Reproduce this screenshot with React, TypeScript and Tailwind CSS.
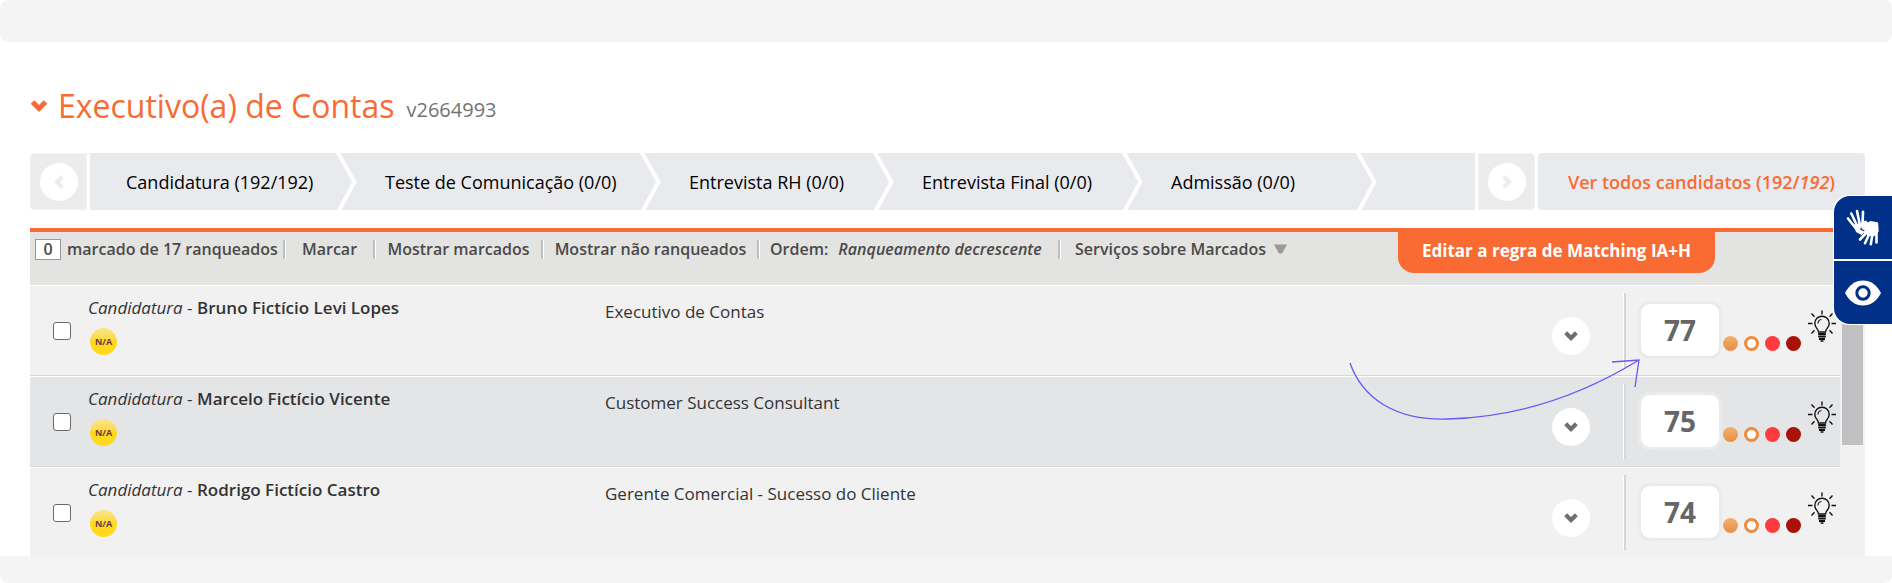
import React, { useState } from 'react';

type Candidate = { name: string; role: string; score: number };

const STAGES = [
  { label: 'Candidatura', count: '(192/192)', width: 'w-[267px] pl-9' },
  { label: 'Teste de Comunicação', count: '(0/0)', width: 'w-[304px] pl-7' },
  { label: 'Entrevista RH', count: '(0/0)', width: 'w-[233px] pl-7' },
  { label: 'Entrevista Final', count: '(0/0)', width: 'w-[249px] pl-7' },
  { label: 'Admissão', count: '(0/0)', width: 'w-[234px] pl-7' },
];

const CANDIDATES: Candidate[] = [
  { name: 'Bruno Fictício Levi Lopes', role: 'Executivo de Contas', score: 77 },
  { name: 'Marcelo Fictício Vicente', role: 'Customer Success Consultant', score: 75 },
  { name: 'Rodrigo Fictício Castro', role: 'Gerente Comercial - Sucesso do Cliente', score: 74 },
];

const Chevron = ({ className }: { className: string }) => (
  <svg viewBox="0 0 17 12" className={className} fill="none" stroke="currentColor" strokeWidth="5">
    <path d="M2 2 8.500 8.500 15 2" />
  </svg>
);

const StageArrow = () => (
  <svg viewBox="0 0 21 57" className="h-[57px] w-[21px] shrink-0" fill="none" stroke="#fff" strokeWidth="4">
    <path d="M1 -2 18.5 29 2 59" />
  </svg>
);

const BulbIcon = () => (
  <svg viewBox="0 0 30 32" className="h-8 w-[30px]" fill="none" stroke="#111" strokeWidth="1.4">
    <path d="M15 0.5v4M1 13.5h4.500M24.500 13.500h4.500M4.500 3.500l3 3.200M25.500 3.500l-3 3.200M4.500 23.500l3-3.200M25.500 23.500l-3-3.200" />
    <path d="M11.500 22c0-3.200-3.700-4.300-3.700-8.600a7.200 7.200 0 0 1 14.400 0c0 4.300-3.700 5.400-3.700 8.600z" />
    <path d="M11 13.500c0-2.200 1.300-3.700 3.500-4" strokeWidth="1.100" />
    <path d="M11.200 24h7.600M11.200 26.500h7.600M12 29h6" strokeWidth="2" />
    <path d="M13.500 31h3" strokeWidth="1.500" />
  </svg>
);

const HandsIcon = () => (
  <svg viewBox="0 0 34 37" className="h-[37px] w-[34px]" fill="none" stroke="#fff" strokeLinecap="round" strokeLinejoin="round">
    <path d="M9.500 19 2 9.500M11.500 17.500 5.300 4.500M14 16.500 11 2M16.500 16 17 2.800" strokeWidth="2.600" />
    <path d="M8.500 16.500 16.500 14.500 19.500 12.500 21 14 15 17.200 12.500 20.500 17 23 15.500 25 11 22.500Z" fill="#fff" strokeWidth="2" />
    <path d="M16.500 17.800 24.500 13.200 31 14.500 31.500 22 28 26 22.500 25.500 18.500 23 22 20 17 19.500Z" fill="#fff" strokeWidth="2.400" />
    <path d="M20.500 23.500 14 30.500M23.500 24.500 19 34.200M26.500 25 24.800 35.200M30.500 22 30.500 33.500" strokeWidth="2.600" />
  </svg>
);

const EyeIcon = () => (
  <svg viewBox="0 0 36 26" className="h-[26px] w-9">
    <path d="M0 13C4 5 10.500 0.500 18 0.500S32 5 36 13c-4 8-10.500 12.500-18 12.500S4 21 0 13z" fill="#fff" />
    <circle cx="18" cy="13" r="6.200" fill="#fff" stroke="#003087" strokeWidth="3" />
  </svg>
);

const Separator = () => <span className="h-[19px] w-[3px] shrink-0 border-l-2 border-r border-l-[#bfc0c2] border-r-white" />;

const NavButton = ({ label, side }: { label: string; side: 'left' | 'right' }) => (
  <button
    aria-label={label}
    className={`flex h-[57px] w-[57px] shrink-0 items-center justify-center border border-[#f1f1f1] bg-[#ececec] ${side === 'left' ? 'rounded-l' : 'rounded-r'}`}
  >
    <span className="flex h-[38px] w-[38px] items-center justify-center rounded-full bg-white text-[#ededed]">
      <Chevron className={`h-2.5 w-3.5 ${side === 'left' ? 'rotate-90' : '-rotate-90'}`} />
    </span>
  </button>
);

const CandidateRow = ({ name, role, score }: Candidate) => (
  <li className="flex h-[91px] border-b border-t border-b-[#d5d6d8] border-t-white bg-[#f1f1f1] even:bg-[#e4e5e7]">
    <label className="flex w-[58px] shrink-0 items-center pl-[23px]">
      <input
        type="checkbox"
        aria-label={name}
        className="h-[18px] w-[18px] appearance-none rounded-[3px] border border-[#6b6b6b] bg-white checked:bg-[#f96b33]"
      />
    </label>
    <div className="w-[517px] shrink-0 pt-2.5 text-[17px] leading-6 text-[#333]">
      <p>
        <i>Candidatura</i> - <span className="font-semibold">{name}</span>
      </p>
      <span className="ml-0.5 mt-2 flex h-[27px] w-[27px] items-center justify-center rounded-full bg-linear-to-b from-[#f8e58a] to-[#ffd91c] to-50% text-[9px] font-bold text-[#6b3a4a]">
        N/A
      </span>
    </div>
    <p className="flex-1 pt-3 text-[17px] leading-7 text-[#333]">{role}</p>
    <button
      aria-label={`Abrir ${name}`}
      className="mr-[33px] mt-[31px] flex h-[38px] w-[38px] shrink-0 items-center justify-center rounded-full bg-white text-[#6f6f6f]"
    >
      <Chevron className="h-2.5 w-3.5" />
    </button>
    <span className="mt-[7px] h-[75px] w-[3px] shrink-0 border-l border-r-2 border-l-white border-r-[#d6d6d6]" />
    <div className="flex w-[214px] shrink-0 pl-3">
      <strong className="mt-[15px] flex h-[58px] w-[84px] items-center justify-center rounded-xl border-3 border-[#ebebeb] bg-white text-[28px] font-bold leading-none text-[#666]">
        {score}
      </strong>
      <div className="mt-[50px] flex gap-1.5 pl-px">
        <span className="h-[15px] w-[15px] rounded-full bg-linear-to-b from-[#efb36c] to-[#ea8c45]" />
        <span className="h-[15px] w-[15px] rounded-full border-3 border-[#f08a3c] bg-white" />
        <span className="h-[15px] w-[15px] rounded-full bg-[#ff3b3f]" />
        <span className="h-[15px] w-[15px] rounded-full bg-[#a81208]" />
      </div>
      <div className="ml-1.5 mt-6">
        <BulbIcon />
      </div>
    </div>
  </li>
);

export default function App() {
  const [order] = useState('Ranqueamento decrescente');

  return (
    <div className="relative overflow-hidden bg-white font-['Open_Sans',sans-serif] text-[#333]">
      <div className="h-[42px] rounded-lg bg-[#f4f4f4]" />

      <main className="pl-[30px] pr-[27px]">
        <h1 className="flex h-[111px] items-center pt-4 text-[32px] text-[#f96b33]">
          <Chevron className="mr-2.5 h-3 w-[18px]" />
          Executivo(a) de Contas
          <small className="ml-3 mt-2 text-xl text-[#73756f]">v2664993</small>
        </h1>

        <nav className="flex gap-[3px] text-lg text-black">
          <NavButton label="Etapa anterior" side="left" />
          <div className="flex min-w-0 flex-1 overflow-hidden bg-[#e9eaee]">
            {STAGES.map((stage) => (
              <a
                key={stage.label}
                href="#"
                className={`flex shrink-0 items-center justify-between whitespace-nowrap ${stage.width}`}
              >
                {stage.label} {stage.count}
                <StageArrow />
              </a>
            ))}
          </div>
          <NavButton label="Próxima etapa" side="right" />
          <a
            href="#"
            className="flex w-[327px] shrink-0 items-center justify-center whitespace-pre rounded bg-[#e9eaee] font-semibold text-[#f96b33]"
          >
            Ver todos candidatos (192/<i>192</i>)
          </a>
        </nav>

        <div className="mt-[18px] flex h-[57px] items-start whitespace-nowrap border-t-4 border-[#f96b33] bg-[#e3e3e1] text-base font-semibold text-[#4a4a4a]">
          <div className="flex h-[34px] w-[1368px] shrink-0 items-center">
            <div className="flex w-[253px] items-center gap-1.5 pl-[5px]">
              <span className="flex h-[21px] w-[26px] items-center justify-center border border-[#9a9a9a] bg-white">0</span>
              marcado de 17 ranqueados
            </div>
            <Separator />
            <button className="w-[87px]">Marcar</button>
            <Separator />
            <button className="w-[165px]">Mostrar marcados</button>
            <Separator />
            <button className="w-[213px]">Mostrar não ranqueados</button>
            <Separator />
            <button className="flex w-[298px] items-center gap-2.5 pl-2.5">
              Ordem: <i>{order}</i>
            </button>
            <Separator />
            <button className="flex items-center gap-2 pl-3.5">
              Serviços sobre Marcados
              <svg viewBox="0 0 14 10" className="h-2.5 w-3.5 shrink-0" fill="#999">
                <path d="M0 0.500h13L8 9.500H5z" />
              </svg>
            </button>
          </div>
          <button className="h-[41px] w-[317px] shrink-0 rounded-b-2xl bg-[#f96b33] pb-1 text-[17px] font-bold text-white">
            Editar a regra de Matching IA+H
          </button>
        </div>

        <div className="flex h-[271px] overflow-hidden">
          <ul className="flex-1">
            {CANDIDATES.map((candidate) => (
              <CandidateRow key={candidate.name} {...candidate} />
            ))}
          </ul>
          <div className="w-[25px] bg-[#f1f1f1] px-0.5">
            <div className="h-40 bg-[#c1c1c3]" />
          </div>
        </div>
      </main>

      <div className="h-[27px] rounded-b-lg bg-[#f4f4f4]" />

      {/* Accessibility shortcuts */}
      <div className="absolute right-0 top-[195px] flex w-[59px] flex-col gap-0.5 rounded-l-2xl border border-r-0 border-white bg-white">
        <button aria-label="Libras" className="flex h-[63px] items-center justify-center rounded-tl-2xl bg-[#003087]">
          <HandsIcon />
        </button>
        <button aria-label="Acessibilidade" className="flex h-[63px] items-center justify-center rounded-bl-2xl bg-[#003087]">
          <EyeIcon />
        </button>
      </div>

      {/* Hand-drawn arrow pointing at the first score */}
      <svg
        viewBox="0 0 294 62"
        className="pointer-events-none absolute right-[250px] top-[359px] h-[62px] w-[294px]"
        fill="none"
        stroke="#6558f5"
        strokeWidth="1.3"
      >
        <path d="M2 4C14 38 46 62 100 60C178 58 242 31 291 1M264 3 291 1 287 28" />
      </svg>
    </div>
  );
}
